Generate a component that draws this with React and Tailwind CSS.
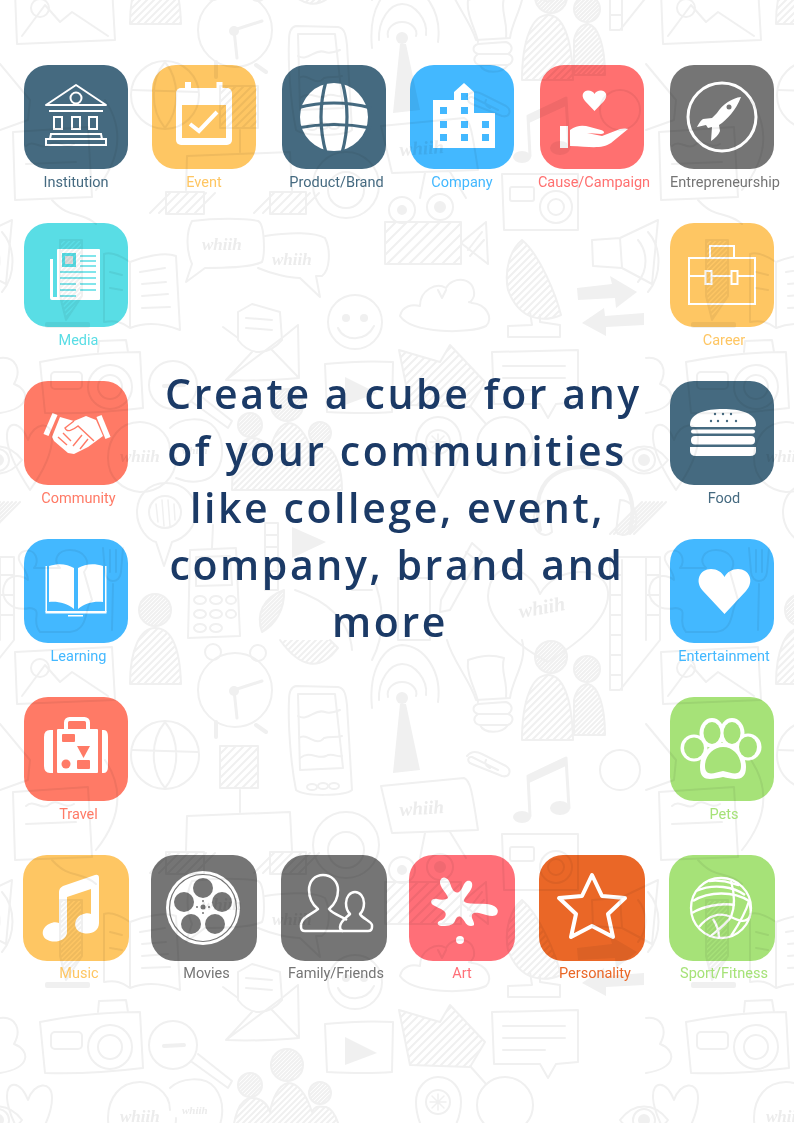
import React from "react";

const W = "#ffffff";

/* ---------- background doodles: one repeating tile, 646 x 660 ---------- */
const hatch = (x1, x2, y1, y2, step, key) => {
  const out = [];
  for (let i = x1 - (y2 - y1); i < x2; i += step) {
    out.push(<line key={key + i} x1={i} y1={y2} x2={i + (y2 - y1)} y2={y1} />);
  }
  return out;
};

const ClipDefs = () => (
  <defs>
    <clipPath id="c-p1"><circle cx="250" cy="425" r="12" /></clipPath>
    <clipPath id="c-p2"><circle cx="287" cy="405" r="16" /></clipPath>
    <clipPath id="c-p3"><circle cx="320" cy="433" r="11" /></clipPath>
    <clipPath id="c-b1"><path d="M232 490 C232 455 240 438 252 438 C262 438 268 445 270 452 C272 440 278 425 288 423 C300 423 308 440 312 452 C316 444 320 447 326 447 C336 450 342 470 342 490 Z" /></clipPath>
    <clipPath id="c-r1"><circle cx="551" cy="657" r="16" /></clipPath>
    <clipPath id="c-r2"><circle cx="587" cy="669" r="13" /></clipPath>
    <clipPath id="c-r3"><path d="M522 740 C522 700 532 675 548 675 C562 675 572 695 573 740 Z" /></clipPath>
    <clipPath id="c-r4"><path d="M574 735 L574 700 C576 690 582 684 588 684 C598 686 605 705 605 735 Z" /></clipPath>
    <clipPath id="c-lamp"><path d="M522 240 C540 255 556 295 561 315 C545 322 520 322 508 290 C504 270 510 250 522 240 Z" /></clipPath>
    <clipPath id="c-vid"><rect x="385" y="222" width="76" height="42" /></clipPath>
    <clipPath id="c-fan"><path d="M399 350 L440 362 L450 345 L485 382 L470 407 L410 405 Z" /></clipPath>
    <clipPath id="c-h2"><circle cx="155" cy="610" r="16" /></clipPath>
    <clipPath id="c-b2"><path d="M130 684 C130 650 140 628 155 628 C172 628 180 650 181 684 Z" /></clipPath>
    <clipPath id="c-leaf"><path d="M284 590 C262 598 256 615 262 632 C275 625 285 610 284 590 Z" /></clipPath>
    <clipPath id="c-cup"><path d="M280 640 C300 668 320 672 338 648 L330 640 Z" /></clipPath>
    <clipPath id="c-s1"><rect x="220" y="746" width="38" height="42" /></clipPath>
    <clipPath id="c-s2"><path d="M60 240 L82 240 L82 296 L66 320 L60 296 Z" /></clipPath>
  </defs>
);

const Tile = () => (
  <g>
    {/* speech bubbles */}
    <path d="M192 221 C215 218 245 218 258 221 C265 224 265 255 262 262 C250 268 215 268 205 268 L186 282 L192 264 C186 250 186 232 192 221Z" />
    <path d="M265 236 C290 232 315 232 325 238 C331 250 330 270 322 276 L316 276 L320 297 L300 278 C290 278 272 274 258 268" />
    {/* book */}
    <path d="M130 262 C118 254 110 252 104 254 L104 322 C115 320 122 322 130 328 C145 322 160 322 180 330 L176 256 C165 252 145 256 130 262 Z M130 262 L130 328" />
    <path d="M140 272 L165 268 M142 284 L166 282 M142 296 L168 294 M142 308 L170 307 M110 272 L122 275 M110 288 L122 290" />
    {/* pencil + bar */}
    <path d="M60 240 L82 240 L82 296 L66 320 L60 296 Z" />
    <g clipPath="url(#c-s2)">{hatch(58, 84, 240, 322, 5, "pn")}</g>
    <rect x="45" y="322" width="45" height="6" rx="2" fill="#f0f0f0" stroke="none" />
    {/* arcs at the left edge */}
    <path d="M2 232 C16 248 16 275 2 292 M-8 240 C2 252 2 270 -8 282" />
    {/* camera */}
    <path d="M40 362 C70 356 110 352 140 352 L143 408 C110 412 70 414 45 413 Z" />
    <path d="M98 352 L99 341 L126 340 L128 352" />
    <rect x="51" y="372" width="31" height="17" rx="4" />
    <circle cx="110" cy="387" r="22" />
    <circle cx="110" cy="387" r="12" />
    <path d="M0 358 C16 356 22 370 14 384 C30 390 32 408 0 413" />
    {/* magnifier */}
    <circle cx="173" cy="385" r="24" />
    <path d="M164 386 L184 385" strokeWidth="4" />
    <path d="M192 402 L228 428 L232 421 L198 394" />
    {/* envelope */}
    <path d="M223 327 L238 338 M282 338 L298 325 L299 378 C275 380 245 381 226 380 Z M226 380 L252 352 M299 378 L272 350" />
    <path d="M238 340 L238 312 L252 304 L280 312 L282 340 C268 356 250 356 238 340 Z M246 318 L272 320 M246 328 L272 330" />
    {/* play box */}
    <path d="M325 364 C345 362 375 361 393 362 L392 412 C370 414 345 413 327 412 Z" />
    <path d="M345 377 L377 393 L345 405 Z" fill="#f0f0f0" stroke="none" />
    {/* heart */}
    <path d="M28 440 C20 420 6 420 7 438 C8 455 22 478 30 490 C40 476 52 455 52 438 C52 420 34 422 28 440 Z" />
    {/* lower bubbles */}
    <path d="M170 450 C170 430 150 422 140 422 C120 422 108 438 108 458 C108 478 122 490 140 492 C160 492 176 478 176 458" />
    <path d="M170 428 C180 418 205 415 215 428 C226 442 224 466 212 476 C205 482 190 484 176 478" />
    {/* people */}
    <circle cx="250" cy="425" r="12" /><g clipPath="url(#c-p1)">{hatch(236, 264, 412, 438, 4, "p1")}</g>
    <circle cx="287" cy="405" r="16" /><g clipPath="url(#c-p2)">{hatch(270, 304, 388, 422, 4, "p2")}</g>
    <circle cx="320" cy="433" r="11" /><g clipPath="url(#c-p3)">{hatch(308, 332, 421, 445, 4, "p3")}</g>
    <path d="M232 490 C232 455 240 438 252 438 C262 438 268 445 270 452 C272 440 278 425 288 423 C300 423 308 440 312 452 C316 444 320 447 326 447 C336 450 342 470 342 490 Z" />
    <g clipPath="url(#c-b1)">{hatch(230, 344, 422, 492, 6, "b1")}</g>
    {/* video camera */}
    <circle cx="402" cy="210" r="13" /><circle cx="402" cy="210" r="4" fill="#f0f0f0" />
    <circle cx="440" cy="207" r="13" /><circle cx="440" cy="207" r="5" fill="#f0f0f0" />
    <rect x="385" y="222" width="76" height="42" />
    <g clipPath="url(#c-vid)">{hatch(385, 461, 222, 264, 11, "vd")}</g>
    <path d="M461 243 L486 222 L488 264 Z M468 250 L482 232 M470 256 L484 240" />
    {/* top camera */}
    <path d="M502 174 L578 174 L578 230 L504 230 Z" />
    <rect x="510" y="187" width="24" height="14" rx="2" />
    <circle cx="556" cy="207" r="16" /><circle cx="556" cy="207" r="8" />
    {/* cloud */}
    <path d="M400 316 C402 306 412 304 420 306 C420 290 436 282 446 288 C452 276 476 276 474 296 C470 306 466 300 472 303 C486 304 494 318 486 326 C470 334 412 334 400 316 Z M438 290 L442 298 L446 290" />
    {/* smiley */}
    <circle cx="355" cy="322" r="27" />
    <circle cx="346" cy="318" r="4" fill="#f0f0f0" stroke="none" />
    <circle cx="364" cy="318" r="4" fill="#f0f0f0" stroke="none" />
    <path d="M338 328 C344 342 366 342 374 326" />
    {/* lamp */}
    <path d="M522 240 C540 255 556 295 561 315 C545 322 520 322 508 290 C504 270 510 250 522 240 Z" />
    <g clipPath="url(#c-lamp)">{hatch(504, 562, 240, 322, 7, "lm")}</g>
    <path d="M530 312 L532 325 L508 326 L508 337 L560 337 L560 325 L540 322 L540 315" />
    {/* arrows */}
    <path d="M577 288 L612 284 L610 276 L637 292 L616 308 L615 298 L578 300 Z" fill="#f0f0f0" stroke="none" />
    <path d="M582 323 L604 308 L605 316 L644 313 L644 325 L606 327 L606 336 Z" fill="#f0f0f0" stroke="none" />
    {/* megaphone */}
    <path d="M592 240 L620 238 L658 220 L652 284 L622 268 L593 266 Z M620 238 L622 268" />
    {/* hatched fan */}
    <path d="M399 350 L440 362 L450 345 L485 382 L470 407 L410 405 Z" />
    <g clipPath="url(#c-fan)">{hatch(398, 486, 344, 408, 8, "fn")}</g>
    {/* note card */}
    <path d="M492 352 L578 350 L578 402 L556 404 L548 418 L540 404 L494 404 Z M503 366 L565 366 M503 378 L565 378 M503 390 L545 390" />
    {/* pin */}
    <path d="M438 497 C426 475 416 462 416 442 C416 428 426 417 438 417 C452 417 461 428 461 442 C461 462 450 475 438 497 Z" />
    <circle cx="438" cy="442" r="12" />
    <path d="M438 434 L438 450 M430 442 L446 442 M432 436 L444 448 M444 436 L432 448" strokeWidth="1.5" />
    {/* ring */}
    <circle cx="505" cy="445" r="28" />
    <path d="M486 424 L470 406" />
    {/* headphones */}
    <path d="M540 530 C530 485 552 467 585 467 C618 467 640 490 630 530" strokeWidth="4" />
    <path d="M620 500 C632 500 638 512 636 524 C634 534 622 538 616 532 Z" />
    {hatch(618, 636, 502, 534, 4, "hp").slice(6, 14)}
    <path d="M548 500 C538 502 532 514 534 524 C536 534 546 538 552 532 Z" />
    {/* eye */}
    <path d="M620 460 C634 442 654 442 668 460 C654 478 634 478 620 460 Z" />
    <circle cx="644" cy="460" r="11" /><circle cx="644" cy="460" r="5" fill="#f0f0f0" />
    {/* hatched-round bubble */}
    <path d="M166 483 C148 483 137 496 137 512 C137 528 148 540 156 542 L164 566 L172 542 C186 538 196 526 196 512 C196 496 184 483 166 483 Z" />
    <circle cx="165" cy="512" r="16" />
    <path d="M156 504 L158 522 M162 500 L164 526 M168 500 L170 526 M174 504 L175 520" strokeWidth="1.5" />
    {/* film & play */}
    <path d="M265 523 L278 523 L278 590 L265 590 Z M265 535 L278 535 M265 547 L278 547 M265 559 L278 559 M265 571 L278 571" />
    <path d="M292 527 L326 542 L292 558 Z" fill="#f0f0f0" stroke="none" />
    {/* calculator */}
    <path d="M190 550 L236 548 L240 636 L188 638 Z M196 557 L230 556 L232 585 L196 586 Z M212 548 L213 525" />
    <ellipse cx="200" cy="600" rx="6" ry="4" /><ellipse cx="216" cy="600" rx="6" ry="4" /><ellipse cx="231" cy="600" rx="5" ry="4" />
    <ellipse cx="200" cy="614" rx="6" ry="4" /><ellipse cx="216" cy="614" rx="6" ry="4" /><ellipse cx="231" cy="614" rx="5" ry="4" />
    <ellipse cx="200" cy="628" rx="6" ry="4" /><ellipse cx="216" cy="628" rx="6" ry="4" />
    {/* people 2 */}
    <circle cx="155" cy="610" r="16" /><g clipPath="url(#c-h2)">{hatch(138, 172, 594, 626, 4, "h2")}</g>
    <path d="M130 684 C130 650 140 628 155 628 C172 628 180 650 181 684 Z" />
    <g clipPath="url(#c-b2)">{hatch(130, 182, 628, 684, 7, "b2")}</g>
    {/* leaf */}
    <path d="M284 590 C262 598 256 615 262 632 C275 625 285 610 284 590 Z" />
    <g clipPath="url(#c-leaf)">{hatch(256, 286, 590, 632, 4, "lf")}</g>
    {/* long swoop */}
    <path d="M295 590 C325 600 350 620 352 650" />
    {/* big heart */}
    <path d="M540 594 C530 565 490 556 488 596 C488 624 525 650 548 662 C575 645 610 620 608 592 C606 565 556 565 540 594 Z" />
    {/* pen */}
    <path d="M472 543 L482 552 L450 610 L440 612 L441 600 Z M466 552 L476 560" />
    <path d="M398 578 L430 578 L430 640 L398 640 Z" />
    <path d="M352 590 L372 590 M372 575 C385 605 385 635 372 660" />
    {/* film right */}
    <path d="M610 557 L640 557 L660 557 L660 640 L620 690 L610 690 Z" />
    <path d="M622 560 L622 690 M646 557 L646 640 M610 575 L622 575 M610 595 L622 595 M610 615 L622 615 M610 635 L622 635 M610 655 L622 655 M610 675 L622 675 M646 575 L660 575 M646 595 L660 595 M646 615 L660 615" />
    {/* puzzle */}
    <path d="M22 552 C36 546 40 562 34 568 L60 568 C52 560 58 550 70 550 C84 550 92 562 84 572 L92 600 C84 606 90 630 70 632 L40 632 C30 620 44 610 30 608 C12 612 0 600 4 586 C8 574 20 574 28 580 C28 568 12 560 22 552 Z" />
    {/* fork */}
    <path d="M103 548 L105 572 C106 584 120 584 121 572 L123 548 M110 550 L110 572 M116 550 L116 572 M113 584 L112 630" />
    {/* alarm clock */}
    <circle cx="235" cy="690" r="37" />
    <circle cx="213" cy="652" r="8" /><circle cx="258" cy="653" r="8" />
    <path d="M234 690 L262 681 M234 690 L237 718" strokeWidth="3" />
    <circle cx="234" cy="691" r="4" fill="#f0f0f0" />
    <path d="M216 722 L216 737 M256 725 L266 732" strokeWidth="4" />
    {/* phone */}
    <path d="M296 686 L338 687 C345 688 346 696 347 705 L352 790 C345 796 305 797 296 790 C290 760 288 720 289 700 C289 692 291 687 296 686 Z" />
    <path d="M298 694 L335 694 L343 768 L300 770 Z" />
    <path d="M298 716 C308 722 315 708 325 712 C330 714 335 712 340 710 M299 738 C308 732 316 748 324 738 C330 736 336 738 342 736 M300 758 C310 750 318 760 326 756 C332 752 338 758 342 756" />
    <ellipse cx="312" cy="787" rx="5" ry="3" /><ellipse cx="323" cy="786" rx="5" ry="3" /><ellipse cx="334" cy="786" rx="5" ry="3" />
    {/* antenna */}
    <path d="M372 708 C368 668 385 646 402 645 C425 646 442 672 438 702" />
    <path d="M379 700 C378 680 390 664 402 664 C415 664 428 680 426 695" />
    <path d="M388 697 C386 688 394 682 402 682 C412 682 418 690 416 696" />
    <circle cx="402" cy="698" r="6" fill="#f0f0f0" stroke="none" />
    <path d="M400 704 L406 704 L420 770 L393 773 Z" fill="#f0f0f0" stroke="none" />
    {/* bulb */}
    <path d="M447 640 C452 660 470 680 476 700 L510 698 C512 680 528 660 522 640" />
    <path d="M468 660 C466 675 476 690 478 702 M506 698 C508 680 500 672 504 658 C490 654 480 656 468 660" />
    <path d="M478 704 C472 706 472 712 478 714 C472 718 474 724 480 725 C484 734 502 734 508 725 C514 722 514 716 508 714 C514 710 512 704 506 702 Z M478 714 L508 714 M480 725 L508 725" />
    {/* people right */}
    <circle cx="551" cy="657" r="16" /><g clipPath="url(#c-r1)">{hatch(534, 568, 640, 674, 4, "r1")}</g>
    <circle cx="587" cy="669" r="13" /><g clipPath="url(#c-r2)">{hatch(573, 601, 655, 683, 4, "r2")}</g>
    <path d="M522 740 C522 700 532 675 548 675 C562 675 572 695 573 740 Z" />
    <g clipPath="url(#c-r3)">{hatch(520, 575, 675, 742, 7, "r3")}</g>
    <path d="M574 735 L574 700 C576 690 582 684 588 684 C598 686 605 705 605 735 Z" />
    <g clipPath="url(#c-r4)">{hatch(573, 606, 684, 736, 5, "r4")}</g>
    {/* clip */}
    <path d="M467 756 C472 750 478 752 482 754 L506 766 C512 770 510 778 502 776 L472 764 C466 762 468 756 472 757 L498 770 M486 760 C484 764 486 766 490 768" />
    {/* music note */}
    <path d="M530 816 L528 776 L566 758 L569 808" strokeWidth="3" />
    <path d="M528 776 L566 758 L566 766 L529 783 Z" fill="#f0f0f0" stroke="none" />
    <ellipse cx="522" cy="817" rx="9" ry="6" fill="#f0f0f0" stroke="none" />
    <ellipse cx="560" cy="808" rx="10" ry="7" fill="#f0f0f0" stroke="none" />
    {/* sign */}
    <path d="M381 786 L464 778 C470 780 472 790 478 830 L392 833 Z M425 833 L420 858 M450 832 L466 858" />
    {/* hatched square + box */}
    <rect x="220" y="746" width="38" height="42" />
    <g clipPath="url(#c-s1)">{hatch(220, 258, 746, 788, 8, "s1")}</g>
    <path d="M240 790 L240 812 M187 816 L290 812 L292 850 M187 816 L186 850" />
    <rect x="166" y="852" width="38" height="22" /><g>{hatch(170, 202, 853, 873, 9, "h3")}</g>
    <rect x="270" y="852" width="36" height="22" /><g>{hatch(274, 304, 853, 873, 9, "h4")}</g>
    {/* lens */}
    <circle cx="346" cy="845" r="33" /><circle cx="346" cy="850" r="18" />
    {/* hatched cup */}
    <path d="M280 640 C300 668 320 672 338 648 L330 640" />
    <g clipPath="url(#c-cup)">{hatch(280, 340, 640, 672, 6, "cp")}</g>
    {/* globe */}
    <circle cx="165" cy="755" r="34" />
    <path d="M132 750 L198 752 M165 722 C150 740 150 770 165 788 M165 722 C180 740 180 770 165 788" />
    {/* frame */}
    <path d="M15 652 L112 647 L115 700 L17 704 Z M22 696 L45 665 L60 682 L72 672 L108 696" />
    <circle cx="40" cy="668" r="9" />
    <path d="M0 724 L30 760 L28 780 L0 790" />
    {/* paper with wave */}
    <path d="M13 792 L88 787 L92 857 L15 860 Z M26 806 C34 798 42 812 50 804 C58 798 64 810 74 804 M26 824 L76 822" />
    <path d="M52 860 C70 880 80 870 96 884" />
    <circle cx="620" cy="770" r="20" />
    <path d="M105 760 C125 790 120 820 96 850" />
  </g>
);

const Whiih = () => (
  <g fill="#ececec" stroke="none" fontFamily="'Liberation Serif', serif" fontStyle="italic" fontWeight="700">
    <text x="202" y="250" fontSize="17">whiih</text>
    <text x="272" y="265" fontSize="17">whiih</text>
    <text x="120" y="462" fontSize="17">whiih</text>
    <text x="182" y="454" fontSize="11">whiih</text>
    <text x="520" y="618" fontSize="20" transform="rotate(-10 520 618)">whiih</text>
    <text x="400" y="816" fontSize="19" transform="rotate(-4 400 816)">whiih</text>
  </g>
);

const offsets = [
  [-646, -660], [0, -660], [646, -660],
  [-646, 0], [0, 0], [646, 0],
  [-646, 660], [0, 660], [646, 660],
];

const Doodles = () => (
  <svg className="absolute inset-0 h-full w-full" viewBox="0 0 794 1123" fill="none" stroke="#f0f0f0" strokeWidth="2" strokeLinecap="round" strokeLinejoin="round">
    <ClipDefs />
    {offsets.map(([x, y]) => (
      <g key={x + "_" + y} transform={`translate(${x} ${y})`}>
        <Tile />
        <Whiih />
      </g>
    ))}
  </svg>
);

/* ---------- icons ---------- */
const Svg = ({ children, s = 104 }) => (
  <svg viewBox={`0 0 ${s} ${s}`} className="h-full w-full">{children}</svg>
);

const Institution = () => (
  <Svg>
    <g fill="none" stroke={W} strokeWidth="2">
      <path d="M22 40 L52 20 L82 40 Z" strokeLinejoin="round" />
      <circle cx="52" cy="33" r="5.5" />
      <path d="M25 46 L79 46" />
      <rect x="30" y="52" width="8" height="12" />
      <rect x="48" y="52" width="8" height="12" />
      <rect x="65" y="52" width="8" height="12" />
      <path d="M26 74 L27 69 L77 69 L78 74" />
      <rect x="22" y="74" width="60" height="6" />
    </g>
  </Svg>
);

const EventI = ({ c }) => (
  <Svg>
    <rect x="33" y="17" width="6" height="9" fill={W} />
    <rect x="64.5" y="17" width="6" height="9" fill={W} />
    <rect x="24" y="23" width="56" height="57" rx="5" fill={W} />
    <rect x="30" y="40" width="44" height="33" fill={c} />
    <path d="M38 59 L47 66 L65 47" fill="none" stroke={W} strokeWidth="4" />
  </Svg>
);

const Globe = ({ c }) => (
  <Svg>
    <circle cx="52" cy="52" r="34" fill={W} />
    <g fill="none" stroke={c} strokeWidth="3.2">
      <path d="M15 43 Q52 33 89 43" />
      <path d="M15 63 Q52 56 89 63" />
      <path d="M44 16 Q34 52 44 88" />
      <path d="M60 16 Q70 52 60 88" />
    </g>
  </Svg>
);

const Building = ({ c }) => (
  <Svg>
    <path d="M23 35 L44 35 L44 27 L54 18 L64 27 L64 48 L85 48 L85 83 L23 83 Z" fill={W} />
    <g fill={c}>
      <rect x="51" y="28" width="7" height="7" />
      <rect x="30" y="42" width="7" height="7" />
      <rect x="51" y="42" width="7" height="7" />
      <rect x="30" y="56" width="7" height="7" />
      <rect x="51" y="56" width="7" height="7" />
      <rect x="72" y="56" width="7" height="7" />
      <rect x="30" y="69" width="7" height="7" />
      <rect x="51" y="69" width="7" height="7" />
      <rect x="72" y="69" width="7" height="7" />
    </g>
  </Svg>
);

const Cause = () => (
  <Svg>
    <path d="M54.5 46 L45 36 C40 30 44 25.500 48 25.500 C51 25.500 53.500 27 54.500 29 C55.500 27 58 25.500 61 25.500 C65 25.500 69 30 64 36 Z" fill={W} />
    <rect x="20" y="61" width="8" height="22" fill={W} />
    <path d="M30 65 C37 60 43 60 50 62 L61 65 C65 66 65 69 61 69 L47 68 L62 71 L75 66 C80 63 86 63 88 64 L71 78 C62 84 52 82 30 81 Z" fill={W} />
  </Svg>
);

const Rocket = ({ c }) => (
  <Svg>
    <circle cx="52" cy="52" r="34" fill="none" stroke={W} strokeWidth="3" />
    <path d="M71 32 C62 33 53 39 47 48 L42 53 L33 54 C30 56 28 60 27 62 L36 60 L38 63 L42 62 L41 76 C45 73 48 71 50 66 L49 60 C57 55 66 45 71 32 Z" fill={W} />
    <circle cx="59" cy="42" r="2.5" fill={c} />
  </Svg>
);

const Media = ({ c }) => (
  <Svg>
    <path d="M26 36 L29 36 L29 74 L34 74 L34 77 L28 77 Q26 77 26 75 Z" fill={W} />
    <rect x="33" y="26" width="43" height="51" rx="1" fill={W} />
    <rect x="38" y="30" width="14" height="14" fill={c} />
    <rect x="41" y="33" width="8" height="8" fill="#dedede" />
    <g stroke={c} strokeWidth="1.4">
      <path d="M56 33 L72 33 M56 38 L72 38 M56 43 L72 43" />
      <path d="M36 49 L72 49 M36 55 L72 55" />
      <path d="M36 61 L52 61 M56 61 L72 61 M36 67 L52 67 M56 67 L72 67 M36 73 L52 73" />
    </g>
  </Svg>
);

const Shake = ({ c }) => (
  <Svg>
    <path d="M31 33 L22 54" stroke={W} strokeWidth="5.500" fill="none" />
    <path d="M75 35 L84 57" stroke={W} strokeWidth="5.500" fill="none" />
    <path d="M36 36 L50 40 L62 35 L72 39 L79 55 L64 66 L50 73 L44 72 L30 60 L28 56 Z" fill={W} />
    <g fill="none" stroke={c} strokeWidth="1.400">
      <path d="M50 40 L41 47 C43 52 49 49 54 45 L70 60" />
      <path d="M64 58 L56 68 M58 54 L49 65 M34 56 L43 64 M39 52 L47 60" />
    </g>
  </Svg>
);

const BookI = ({ c }) => (
  <Svg>
    <path d="M25 27 C35 24 43 25 50 29 L50 71 C42 66 33 65 25 68 Z" fill={W} />
    <path d="M54 29 C61 25 70 24 79 27 L79 68 C71 65 62 66 54 71 Z" fill={W} />
    <path d="M25 63 L25 72 L79 72 L79 63 C70 62 61 64 54 70 L50 70 C43 64 33 62 25 63 Z" fill={c} />
    <path d="M25 68 C33 64 42 65 50 71 L54 71 C62 65 71 64 79 68 L79 72 L25 72 Z" fill={W} opacity="0" />
    <rect x="21.500" y="27" width="1.500" height="46" fill={W} />
    <rect x="81" y="27" width="1.500" height="46" fill={W} />
    <rect x="21.500" y="72" width="61" height="2.500" fill={W} />
    <rect x="44" y="76" width="15" height="1.500" fill={W} />
  </Svg>
);

const Suitcase = ({ c }) => (
  <Svg>
    <rect x="42" y="22" width="22" height="14" rx="3.500" fill="none" stroke={W} strokeWidth="4" />
    <rect x="33" y="32" width="41" height="44" rx="1" fill={W} />
    <path d="M29 33 L26 33 Q20 33 20 40 L20 69 Q20 76 26 76 L29 76 Z" fill={W} />
    <path d="M78 33 L80 33 Q84 33 84 40 L84 69 Q84 76 80 76 L78 76 Z" fill={W} />
    <g fill={c}>
      <rect x="38" y="37" width="13" height="8" rx="1" />
      <path d="M53 49 L66 49 L59.500 61 Z" />
      <circle cx="42" cy="67" r="4.500" />
      <rect x="53" y="63" width="13" height="9" rx="1" />
    </g>
  </Svg>
);

const Briefcase = () => (
  <Svg>
    <g fill="none" stroke={W} strokeWidth="2">
      <rect x="19" y="35" width="66" height="46" />
      <rect x="40" y="23" width="24" height="12" />
      <path d="M19 53 L35 53 M42 53 L61 53 M68 53 L85 53" />
      <rect x="35.500" y="48" width="6" height="13" />
      <rect x="61.500" y="48" width="6" height="13" />
    </g>
  </Svg>
);

const Burger = ({ c }) => (
  <Svg>
    <path d="M20 44 C20 32 36 28 53 28 C70 28 86 32 86 44 Q86 46 83 46 L23 46 Q20 46 20 44 Z" fill={W} />
    <rect x="21" y="48.500" width="64" height="4" rx="2" fill={W} />
    <rect x="21" y="55" width="64" height="8.500" rx="4" fill={W} />
    <path d="M20 66 L86 66 L86 70 Q86 75 80 75 L26 75 Q20 75 20 70 Z" fill={W} />
    <g fill={c}>
      <circle cx="45" cy="33" r="1.200" /><circle cx="53" cy="33" r="1.200" /><circle cx="61" cy="33" r="1.200" />
      <circle cx="41" cy="40" r="1.200" /><circle cx="48" cy="40" r="1.200" /><circle cx="57" cy="40" r="1.200" /><circle cx="66" cy="40" r="1.200" />
    </g>
  </Svg>
);

const HeartI = () => (
  <Svg>
    <path d="M54.500 75 L33 52 C24 42 30 30 41 30 C47 30 52 33 54.500 38 C57 33 62 30 68 30 C79 30 85 42 76 52 Z" fill={W} />
  </Svg>
);

const Paw = ({ c }) => (
  <Svg>
    <g fill={W}>
      <ellipse cx="42" cy="36" rx="12.500" ry="15" />
      <ellipse cx="62" cy="36" rx="12.500" ry="15" />
      <circle cx="24" cy="51" r="13.500" />
      <circle cx="78" cy="50" r="13.500" />
      <path d="M30 70 C30 55 42 46 53 46 C65 46 76 56 76 70 C76 86 63 82 53 80 C42 82 30 86 30 70 Z" />
    </g>
    <g fill={c}>
      <ellipse cx="42" cy="36" rx="8.500" ry="11" />
      <ellipse cx="62" cy="36" rx="8.500" ry="11" />
      <ellipse cx="24" cy="51" rx="10" ry="10.500" />
      <ellipse cx="78" cy="50" rx="9" ry="10.500" />
      <path d="M35 69 C35 58 44 50 53 50 C63 50 71 59 71 69 C71 80 62 76 53 74 C44 76 35 80 35 69 Z" />
    </g>
  </Svg>
);

const Note = () => (
  <Svg s={106}>
    <path d="M36 37 Q36 33 40 31 L72 20 Q76 19 76 23 L76 68 C76 76 68 80 60 78 C50 76 50 64 58 60 C62 58 66 58 68 59 L68 34 L44 42 L44 78 C43 85 34 88 27 86 C17 83 18 73 26 69 C30 67 33 67 36 68 Z" fill={W} />
  </Svg>
);

const Reel = ({ c }) => (
  <Svg s={106}>
    <circle cx="52" cy="53" r="37" fill={W} />
    <circle cx="52" cy="53" r="33.500" fill="none" stroke={c} strokeWidth="1.200" />
    <g fill={c}>
      <circle cx="52" cy="33" r="10" />
      <circle cx="33" cy="47" r="10" />
      <circle cx="71" cy="47" r="10" />
      <circle cx="40" cy="69" r="10" />
      <circle cx="64" cy="69" r="10" />
      <circle cx="52" cy="52" r="2.500" />
      <circle cx="52" cy="46" r="1" /><circle cx="52" cy="58" r="1" />
      <circle cx="46" cy="52" r="1" /><circle cx="58" cy="52" r="1" />
    </g>
  </Svg>
);

const Family = () => (
  <Svg s={106}>
    <g fill="none" stroke={W} strokeWidth="2.500" strokeLinejoin="round">
      <path d="M62 76 L24 76 Q20 76 20 72 L20 69 C21 62 30 60 37 54 C32 50 28 43 28 35 C28 26 34 20 42 20 C50 20 57 26 57 35 C57 43 53 50 48 54 C52 59 60 61 66 65" />
      <path d="M62 76 L87 76 Q91 76 91 72 L91 70 C90 66 82 64 79 59 C82 56 83 52 83 48 C83 42 79 37 74 37 C69 37 65 42 65 48 C65 52 66 56 69 59 C66 62 59 66 59 72 Q59 76 62 76" />
    </g>
  </Svg>
);

const Splat = () => (
  <Svg s={106}>
    <path d="M31 26 C33 20 39 22 41 28 C43 35 46 39 50 37 C54 34 54 28 58 26 C62 25 64 28 63 32 C61 38 55 42 55 46 C57 50 68 48 78 49 C86 50 91 54 88 59 C85 63 78 60 70 58 C65 57 62 58 63 63 C65 68 67 71 62 71 C57 71 56 66 53 63 C50 60 47 62 46 66 C44 71 37 71 32 71 C27 70 28 66 33 65 C37 63 38 58 35 56 C31 53 27 52 24 50 C20 47 23 43 28 44 C32 45 37 45 39 43 C38 38 30 32 31 26 Z" fill={W} />
    <circle cx="51" cy="85" r="4" fill={W} />
  </Svg>
);

const Star = () => (
  <Svg s={106}>
    <path d="M53 20 L63 41 L86 43 L69 59 L74 82 L53 71 L32 82 L37 59 L20 43 L43 41 Z" fill="none" stroke={W} strokeWidth="4" strokeLinejoin="round" />
  </Svg>
);

const Ball = () => (
  <Svg s={106}>
    <g fill="none" stroke={W} strokeWidth="2.300">
      <circle cx="52" cy="53" r="30" />
      <path d="M40 26 C58 24 66 30 70 30 M27 36 C45 28 65 32 76 40" />
      <path d="M24 46 C40 36 65 36 80 46 L82 56" />
      <path d="M62 26 C66 40 66 52 62 62 C56 70 48 76 42 81" />
      <path d="M23 58 C36 50 56 48 66 50 M80 46 C76 60 68 72 62 81" />
      <path d="M30 72 C38 62 50 56 62 62 C70 66 76 68 81 62 M44 64 C48 70 50 76 50 83" />
    </g>
  </Svg>
);

/* ---------- data ---------- */
const NAVY = "#456a80";
const GOLD = "#fec663";
const BLUE = "#43b8ff";
const ROSE = "#ff7070";
const GREY = "#757575";
const TEAL = "#59dde5";
const CORAL = "#ff7a66";
const LIME = "#a6e278";
const ORANGE = "#ea6727";
const PINK = "#ff6f78";

const items = [
  { label: "Institution", c: NAVY, I: Institution, pos: "col-start-1 row-start-1" },
  { label: "Event", c: GOLD, I: EventI, pos: "col-start-2 row-start-1" },
  { label: "Product/Brand", c: NAVY, I: Globe, pos: "col-start-3 row-start-1", off: "ml-[5px]" },
  { label: "Company", c: BLUE, I: Building, pos: "col-start-4 row-start-1" },
  { label: "Cause/Campaign", c: ROSE, I: Cause, pos: "col-start-5 row-start-1", off: "ml-[4px]" },
  { label: "Entrepreneurship", c: GREY, I: Rocket, pos: "col-start-6 row-start-1", off: "ml-[6px]" },
  { label: "Media", c: TEAL, I: Media, pos: "col-start-1 row-start-2", off: "ml-[5px]" },
  { label: "Career", c: GOLD, I: Briefcase, pos: "col-start-6 row-start-2", off: "ml-[4px]" },
  { label: "Community", c: CORAL, I: Shake, pos: "col-start-1 row-start-3", off: "ml-[5px]" },
  { label: "Food", c: NAVY, I: Burger, pos: "col-start-6 row-start-3", off: "ml-[4px]" },
  { label: "Learning", c: BLUE, I: BookI, pos: "col-start-1 row-start-4", off: "ml-[5px]" },
  { label: "Entertainment", c: BLUE, I: HeartI, pos: "col-start-6 row-start-4", off: "ml-[4px]" },
  { label: "Travel", c: CORAL, I: Suitcase, pos: "col-start-1 row-start-5", off: "ml-[5px]" },
  { label: "Pets", c: LIME, I: Paw, pos: "col-start-6 row-start-5", off: "ml-[4px]" },
  { label: "Music", c: GOLD, I: Note, pos: "col-start-1 row-start-6", big: true, off: "ml-[6px]" },
  { label: "Movies", c: GREY, I: Reel, pos: "col-start-2 row-start-6", big: true, off: "ml-[5px]" },
  { label: "Family/Friends", c: GREY, I: Family, pos: "col-start-3 row-start-6", big: true, off: "ml-[4px]" },
  { label: "Art", c: PINK, I: Splat, pos: "col-start-4 row-start-6", big: true },
  { label: "Personality", c: ORANGE, I: Star, pos: "col-start-5 row-start-6", big: true, off: "ml-[6px]" },
  { label: "Sport/Fitness", c: LIME, I: Ball, pos: "col-start-6 row-start-6", big: true, off: "ml-[4px]" },
];

const lines = [
  { t: "Create a cube for any", cls: "ml-[7px]" },
  { t: "of your communities", cls: "mr-[6px]" },
  { t: "like college, event,", cls: "mr-[5px]" },
  { t: "company, brand and", cls: "mr-[6px]" },
  { t: "more", cls: "mr-[20px]" },
];

const Cube = ({ label, c, I, pos, big, off = "" }) => (
  <div className={`flex flex-col items-center ${pos}`}>
    <div
      className={`mix-blend-multiply ${big ? "h-[106px] w-[106px] rounded-[24px]" : "h-[104px] w-[104px] rounded-[24px]"}`}
      style={{ backgroundColor: c }}
    >
      <I c={c} />
    </div>
    <span
      className={`whitespace-nowrap text-[14.5px] leading-[20px] font-['Roboto',sans-serif] ${big ? "mt-[3px]" : "mt-[4px]"} ${off}`}
      style={{ color: c }}
    >
      {label}
    </span>
  </div>
);

export default function App() {
  return (
    <div className="relative h-[1123px] w-[794px] overflow-hidden bg-white">
      <Doodles />
      <div className="relative ml-[12px] grid grid-cols-[128px_128px_132px_124px_136px_124px] grid-rows-[repeat(6,158px)] pt-[65px]">
        {items.map((it) => (
          <Cube key={it.label} {...it} />
        ))}
        <div className="col-start-2 col-span-4 row-start-2 row-span-4 flex flex-col items-center pt-[142px] text-[41px] leading-[57px] font-semibold tracking-[2.6px] text-[#1b3a66] font-['Open_Sans',sans-serif]">
          {lines.map((l) => (
            <span key={l.t} className={`whitespace-nowrap ${l.cls}`}>{l.t}</span>
          ))}
        </div>
      </div>
    </div>
  );
}
